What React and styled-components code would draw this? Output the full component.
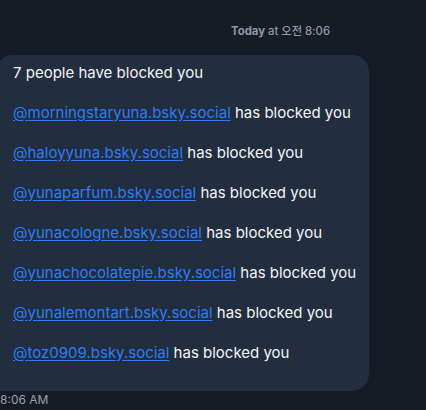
import React from "react";
import styled, { createGlobalStyle } from "styled-components";

const GlobalStyle = createGlobalStyle`
  html, body {
    margin: 0;
    padding: 0;
    background: #161c26;
    overflow: hidden;
  }
  body {
    font-family: Inter, "Noto Sans CJK KR", sans-serif;
  }
`;

const Page = styled.div`
  width: 426px;
  height: 410px;
  background: #161c26;
  display: flex;
  flex-direction: column;
`;

const Stamp = styled.div`
  display: flex;
  justify-content: flex-end;
  padding: 24px 96px 0 0;
  height: 31px;
  box-sizing: border-box;
  font-size: 11.3px;
  line-height: 14px;
  font-weight: 500;
  color: #8f98a6;
  b {
    font-weight: 700;
  }
`;

const Bubble = styled.div`
  margin: 24px 0 0 -4px;
  width: 373px;
  box-sizing: border-box;
  background: #222d3f;
  border-radius: 17px 17px 17px 0;
  padding: 8px 0 28px 17px;
  display: flex;
  flex-direction: column;
  gap: 20px;
`;

const Line = styled.div`
  font-size: 15px;
  line-height: 20px;
  color: #f3f5f8;
  white-space: nowrap;
`;

const Handle = styled.a`
  color: #2c7ef2;
  text-decoration: underline;
  text-underline-offset: 2px;
`;

const Time = styled.div`
  font-size: 12px;
  line-height: 16px;
  color: #9aa1ab;
  padding-top: 1px;
`;

const handles = [
  "morningstaryuna.bsky.social",
  "haloyyuna.bsky.social",
  "yunaparfum.bsky.social",
  "yunacologne.bsky.social",
  "yunachocolatepie.bsky.social",
  "yunalemontart.bsky.social",
  "toz0909.bsky.social",
];

export default function App() {
  return (
    <Page>
      <GlobalStyle />
      <Stamp>
        <span>
          <b>Today</b> at 오전 8:06
        </span>
      </Stamp>
      <Bubble>
        <Line>7 people have blocked you</Line>
        {handles.map((h) => (
          <Line key={h}>
            <Handle>@{h}</Handle> has blocked you
          </Line>
        ))}
      </Bubble>
      <Time>8:06 AM</Time>
    </Page>
  );
}
